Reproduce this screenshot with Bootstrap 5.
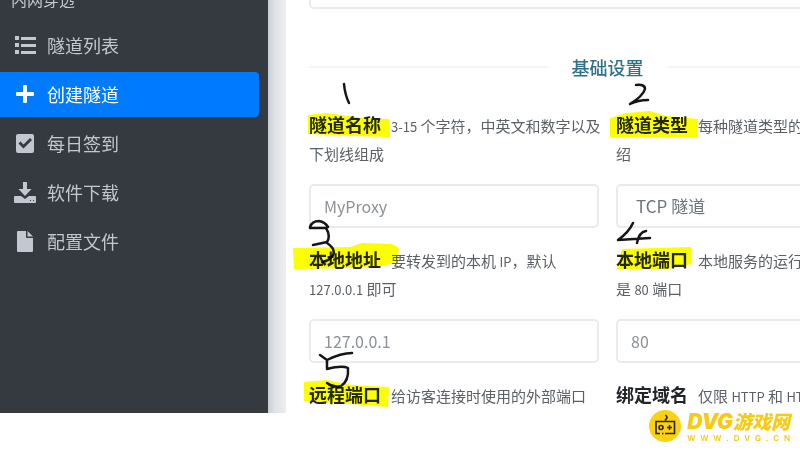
<!DOCTYPE html>
<html lang="zh-CN">
<head>
<meta charset="utf-8">
<meta name="viewport" content="width=device-width, initial-scale=1">
<title>创建隧道</title>
<link href="https://cdn.jsdelivr.net/npm/bootstrap@5.3.0/dist/css/bootstrap.min.css" rel="stylesheet">
<style>
  body { font-family: "Noto Sans CJK SC", "Noto Sans", sans-serif; font-size: 18px; background: #fff; }
  .app-view { padding-bottom: 38px; }
  .side-menu { width: 268px; background: #343a40; color: #c2c7d0; padding-right: 9px; }
  .menu-heading { font-size: 16px; line-height: 24px; margin-top: -13px; padding-left: 11px; margin-bottom: 12px; }
  .side-menu .nav { gap: 4px; }
  .side-menu .nav-link { color: #c2c7d0; height: 45px; padding: 0 0 0 14px; gap: 11px; border-radius: 0 4px 4px 0; }
  .side-menu .nav-link.active { background: #007bff; color: #fff; }
  .side-menu svg { width: 22px; height: 22px; fill: currentColor; }
  .gutter-strip { width: 18px; background: linear-gradient(90deg, #c9ccd1, #e0e3e7 40%, #eceef1); }
  .content-pane { min-width: 0; padding-left: 23px; }
  .tunnel-form { width: 121%; min-width: 597px; }
  .form-control, .form-select { height: 44px; border: 2px solid #e9ebec; border-radius: 5px; padding: 0 13px; font-size: 16px; color: #6c757d; background-image: none; }
  .form-select { font-size: 17px; padding-left: 18px; }
  .form-control::placeholder { color: #8b9196; }
  .prior-field { height: 44px; margin-top: -35px; }
  .section-title { color: #2f7189; font-size: 18px; line-height: 28px; margin: 44px 0 31px; gap: 24px; }
  .section-title::before, .section-title::after { content: ""; flex: 1; border-top: 2px solid #f4f5f6; }
  .field-grid { display: grid; grid-template-columns: repeat(2, minmax(0, 1fr)); gap: 19px 17px; }
  .field-text { line-height: 28px; height: 56px; margin-bottom: 16px; white-space: nowrap; color: #5b6066; font-size: 15px; }
  .field-text label { color: #212529; font-size: 18px; line-height: 18px; font-weight: 700; margin-right: 10px; }
  .latin { font-size: 13px; line-height: 13px; }
  .pen-layer { left: 286px; top: 0; width: 514px; height: 413px; pointer-events: none; mix-blend-mode: multiply; }
  .site-mark { right: 10px; bottom: 9px; gap: 6px; color: #f7cb13; text-decoration: none; }
  .site-mark svg { width: 32px; height: 32px; }
  .mark-name { font-family: Inter, "Noto Sans CJK SC", sans-serif; font-size: 21px; line-height: 24px; font-weight: 900; }
  .mark-name span { font-size: 19px; line-height: 19px; }
  .mark-url { font-family: Inter, sans-serif; font-size: 8px; line-height: 8px; font-weight: 600; }
</style>
<script src="https://cdn.jsdelivr.net/npm/bootstrap@5.3.0/dist/js/bootstrap.bundle.min.js"></script>
</head>
<body>
<div class="app-view vh-100 overflow-hidden position-relative">
  <div class="d-flex h-100 overflow-hidden">
    <aside class="side-menu flex-shrink-0">
      <div class="menu-heading">内网穿透</div>
      <nav class="nav flex-column mt-0">
        <a class="nav-link d-flex align-items-center" href="#list">
          <svg viewBox="0 0 22 22"><path d="M1 1h4v4H1zM1 8h4v4H1zM1 15h4v4H1zM7 2h15v3H7zM7 9h15v3H7zM7 16h15v3H7z"/></svg>隧道列表</a>
        <a class="nav-link active d-flex align-items-center" href="#create" aria-current="page">
          <svg viewBox="0 0 22 22"><path d="M10 1h2q1 0 1 1v6h6q1 0 1 1v2q0 1-1 1h-6v6q0 1-1 1h-2q-1 0-1-1v-6H3q-1 0-1-1V9q0-1 1-1h6V2q0-1 1-1z"/></svg>创建隧道</a>
        <a class="nav-link d-flex align-items-center" href="#sign">
          <svg viewBox="0 0 22 22"><path fill-rule="evenodd" d="M4 1h14q2 0 2 2v15q0 2-2 2H4q-2 0-2-2V3q0-2 2-2zM4.500 10.500 9.500 15.500 18 7 16 5 9.500 11.500 6.500 8.500z"/></svg>每日签到</a>
        <a class="nav-link d-flex align-items-center" href="#download">
          <svg viewBox="0 0 22 22"><path d="M9 0h4v7h4.500L11 14 4.500 7H9z"/><path fill-rule="evenodd" d="M1 14h6l4 3 4-3h6q1 0 1 1v5q0 1-1 1H1q-1 0-1-1v-5q0-1 1-1zM16 18v1h1v-1zM19 18v1h1v-1z"/></svg>软件下载</a>
        <a class="nav-link d-flex align-items-center" href="#config">
          <svg viewBox="0 0 22 22"><path d="M4 0h8v6q0 1 1 1h6v13q0 1-1 1H4q-1 0-1-1V1q0-1 1-1zM13.500 0 19 5.500h-5.500z"/></svg>配置文件</a>
      </nav>
    </aside>
    <div class="gutter-strip flex-shrink-0"></div>
    <main class="content-pane flex-grow-1 overflow-hidden">
      <form class="tunnel-form">
        <input class="form-control prior-field" type="text" aria-label="节点">
        <h2 class="section-title d-flex align-items-center">基础设置</h2>
        <div class="field-grid">
          <div>
            <div class="field-text"><label for="name">隧道名称</label><span class="latin">3-15</span> 个字符，中英文和数字以及<br>下划线组成</div>
            <input class="form-control" id="name" type="text" placeholder="MyProxy">
          </div>
          <div>
            <div class="field-text"><label for="type">隧道类型</label>每种隧道类型的介<br>绍</div>
            <select class="form-select" id="type"><option>TCP 隧道</option></select>
          </div>
          <div>
            <div class="field-text"><label for="addr">本地地址</label>要转发到的本机 <span class="latin">IP</span>，默认<br><span class="latin">127.0.0.1</span> 即可</div>
            <input class="form-control" id="addr" type="text" placeholder="127.0.0.1">
          </div>
          <div>
            <div class="field-text"><label for="port">本地端口</label>本地服务的运行端口<br>是 <span class="latin">80</span> 端口</div>
            <input class="form-control" id="port" type="text" placeholder="80">
          </div>
          <div>
            <div class="field-text"><label for="remote">远程端口</label>给访客连接时使用的外部端口</div>
            <input class="form-control" id="remote" type="text">
          </div>
          <div>
            <div class="field-text"><label for="domain">绑定域名</label>仅限 <span class="latin">HTTP</span> 和 <span class="latin">HTTPS</span></div>
            <input class="form-control" id="domain" type="text">
          </div>
        </div>
      </form>
    </main>
  </div>

  <!-- highlighter and pen notes -->
  <svg class="pen-layer position-absolute" viewBox="286 0 514 413" aria-hidden="true">
    <g fill="#fbff00">
      <path d="M308 115 326 113 363 118 389 119 390 137 352 136 308 134z"/>
      <path d="M610 118 626 113 650 111 666 116 698 119 697 137 610 137z"/>
      <path d="M293 248 350 247 362 243 392 244 399 248 397 262 382 266 350 268 294 269z"/>
      <path d="M622 249 691 247 692 264 668 269 617 269z"/>
      <path d="M304 382 326 380 352 385 389 387 388 407 350 404 304 401z"/>
    </g>
    <g fill="none" stroke="#161616" stroke-width="2.500" stroke-linecap="round" stroke-linejoin="round">
      <path d="M344 84 Q345 95 349 103"/>
      <path d="M636 85 Q645 84 645 89 Q643 96 630 104 Q638 100 648 100"/>
      <path d="M310 227 Q312 221 319 221 Q325 222 328 227 M310 228 H326 Q331 236 327 242 L313 245 M327 243 Q336 249 333 255 Q329 261 322 262"/>
      <path d="M633 223 Q629 232 618 240 L650 238 M646 231 Q639 232 637 243"/>
      <path d="M320 355 327 360 Q341 353 352 353 M327 360 V369 Q342 365 348 368 Q349 381 341 386 Q333 388 327 383"/>
    </g>
  </svg>

  <a class="site-mark position-absolute d-flex align-items-center" href="#home">
    <svg viewBox="0 0 32 32"><circle cx="16" cy="16" r="16" fill="#fbd114"/><g fill="none" stroke="#292516" stroke-width="1.600"><path d="M11 23.500H7V11.500h18.500v12H16M13 23.500h1.500M16.500 11V9.500q3-2 0-4.500"/><circle cx="12" cy="17.500" r="2"/><path d="M18 17.500h5M20.500 15v5"/></g></svg>
    <div>
      <div class="mark-name fst-italic text-nowrap">DVG<span>游戏网</span></div>
      <div class="mark-url d-flex justify-content-between"><span>W</span><span>W</span><span>W</span><span>.</span><span>D</span><span>V</span><span>G</span><span>.</span><span>C</span><span>N</span></div>
    </div>
  </a>
</div>
</body>
</html>
